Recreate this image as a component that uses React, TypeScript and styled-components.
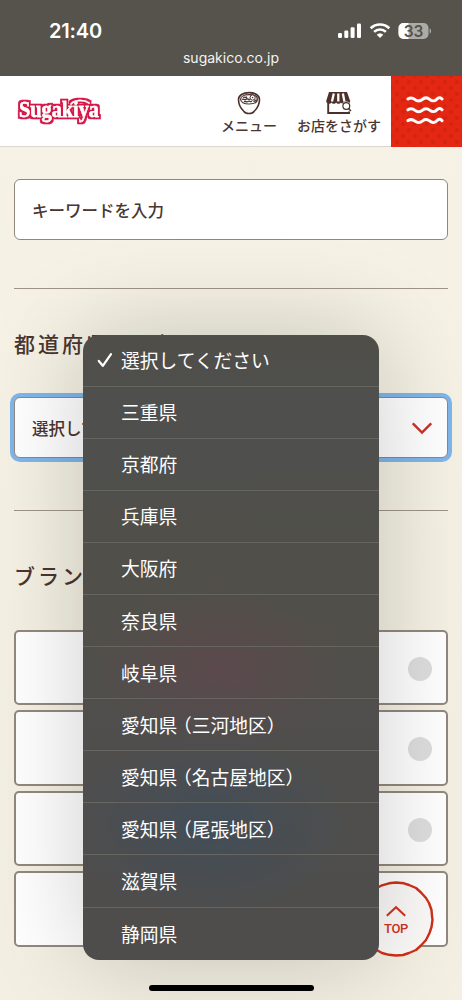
import React from "react";
import styled, { createGlobalStyle } from "styled-components";

const jp = `"Noto Sans CJK JP", sans-serif`;
const latin = `Inter, "Noto Sans CJK JP", sans-serif`;

const GlobalStyle = createGlobalStyle`
  * { box-sizing: border-box; }
  body { margin: 0; background: #f6f2e6; font-family: ${jp}; color: #4b352f; }
`;

const Screen = styled.div`
  position: relative;
  width: 462px;
  height: 1000px;
  overflow: hidden;
  background: linear-gradient(#f7f2e6, #f5f1e4 40%, #f3efe2);
`;

const StatusArea = styled.div`
  height: 76px;
  background: #55534c;
  color: #fff;
  font-family: ${latin};
`;

const StatusRow = styled.div`
  display: flex;
  justify-content: space-between;
  align-items: center;
  height: 48px;
  padding: 14px 30px 0 49px;
`;

const Clock = styled.span`
  font-size: 20px;
  line-height: 24px;
  font-weight: 600;
  letter-spacing: -0.15px;
`;

const StatusIcons = styled.div`
  display: flex;
  align-items: center;
  svg { display: block; }
`;

const Address = styled.div`
  text-align: center;
  font-size: 14px;
  line-height: 20px;
  color: #f4f4f2;
`;

const Header = styled.header`
  display: flex;
  height: 71px;
  background: #fff;
  border-bottom: 1px solid #dcd7cd;
`;

const Logo = styled.div`
  width: 210px;
  padding: 18px 0 0 14px;
  svg { display: block; }
`;

const NavItem = styled.a<{ $width: number }>`
  display: flex;
  flex-direction: column;
  align-items: center;
  width: ${(p) => p.$width}px;
  padding-top: 15px;
  font-size: 14px;
  line-height: 20px;
  font-weight: 500;
  white-space: nowrap;
  svg { display: block; }
`;

const NavGroup = styled.nav`
  display: flex;
  width: 181px;
  gap: 20px;
  padding-left: 11px;
`;

const MenuButton = styled.div`
  display: flex;
  align-items: center;
  justify-content: center;
  width: 71px;
  height: 71px;
  background-color: #e42713;
  background-image:
    radial-gradient(circle, #d3230f 1.5px, transparent 2.3px),
    radial-gradient(circle, #d3230f 1.5px, transparent 2.3px);
  background-size: 12px 12px;
  background-position: 0 0, 6px 6px;
  padding-bottom: 4px;
  padding-right: 4px;
`;

const Content = styled.main`
  padding: 32.4px 14px 0;
`;

const Field = styled.div<{ $focused?: boolean }>`
  display: flex;
  align-items: center;
  justify-content: space-between;
  height: 61.1px;
  padding: 0 15px 0 17px;
  border: 1px solid #91877e;
  border-radius: 6px;
  background: #fff;
  font-size: 16.5px;
  font-weight: 500;
  box-shadow: ${(p) => (p.$focused ? "0 0 0 4px #7fb6ea" : "none")};
`;

const Divider = styled.div<{ $top: number }>`
  height: 1px;
  margin-top: ${(p) => p.$top}px;
  background: #9d9389;
`;

const SectionTitle = styled.h2<{ $top: number; $bottom: number }>`
  margin: ${(p) => p.$top}px 0 ${(p) => p.$bottom}px;
  font-size: 21px;
  line-height: 32px;
  font-weight: 500;
  letter-spacing: 3px;
`;

const BrandList = styled.div`
  display: flex;
  flex-direction: column;
  gap: 5px;
`;

const BrandCard = styled.div`
  display: flex;
  align-items: center;
  justify-content: flex-end;
  height: 75.5px;
  padding: 3px 14px 0 0;
  border: 2px solid #93887e;
  border-radius: 5px;
  background: #fff;
`;

const Radio = styled.span`
  width: 24px;
  height: 24px;
  border-radius: 50%;
  background: #dedede;
`;

const TopButton = styled.div`
  position: absolute;
  left: 358px;
  top: 881px;
  width: 76px;
  height: 76px;
  display: flex;
  flex-direction: column;
  align-items: center;
  padding-top: 23.5px;
  color: #d33222;
  font: 500 13px/16px Roboto, sans-serif;
  letter-spacing: -0.4px;
`;

const Ring = styled.svg`
  position: absolute;
  inset: 0;
`;

const TopArrow = styled.svg`
  position: relative;
  display: block;
  margin-bottom: 4px;
`;

const TopLabel = styled.span`
  position: relative;
`;

const Picker = styled.div`
  position: absolute;
  left: 83px;
  top: 334.5px;
  width: 296px;
  height: 625px;
  overflow: hidden;
  border-radius: 16px;
  background:
    radial-gradient(ellipse 120px 80px at 138px 334px, rgba(98, 70, 77, 0.62), transparent),
    radial-gradient(ellipse 140px 90px at 128px 490px, rgba(62, 78, 92, 0.75), transparent),
    linear-gradient(#4f4e48, #4f4f4d 10%, #4f4f4e 17%, #504f49 32%, #514f4a 50%, #4f4e4d 65%, #4e4d4c);
`;

const PickerShadow = styled.div`
  position: absolute;
  left: 83px;
  top: 334.5px;
  width: 296px;
  height: 625px;
  border-radius: 16px;
  box-shadow: 0 0 100px rgba(0, 0, 0, 0.2);
`;

const Option = styled.div`
  display: flex;
  align-items: center;
  height: 52.1px;
  padding: 0 0 0 14px;
  color: #fff;
  font-size: 18.75px;
  line-height: 28px;
  font-weight: 400;
  &:not(:last-child) { border-bottom: 1px solid #666560; }
`;

const CheckSlot = styled.span`
  width: 24px;
  svg { display: block; }
`;

const OpenParen = styled.span`
  margin-left: -4.3px;
`;

const HomeBar = styled.div`
  position: absolute;
  left: 149px;
  top: 984.5px;
  width: 165px;
  height: 6px;
  border-radius: 3px;
  background: #000;
`;

const BowlIcon = () => (
  <svg width="24" height="24" viewBox="0 0 24 24" fill="none" stroke="#4b302c">
    <path d="M1.500 8.500C1.500 4.300 6 1.600 12 1.600S22.500 4.300 22.500 8.500c0 5-2.500 9.200-5.500 12-1.500 2.600-8.500 2.600-10 0-3-2.800-5.500-7-5.500-12Z" strokeWidth="1.600" />
    <path d="M3.600 8.300C3.600 5.500 7 3.600 12 3.600S20.400 5.500 20.400 8.300c0 2.900-3.400 4.700-8.400 4.700S3.600 11.200 3.600 8.300Z" strokeWidth="1.200" />
    <path d="M5 8.700c1.500-2 2.500 1 4-.5s2.500 1 4 0M6 6.500c1.500-1 2.500.8 4-.8M7 10.800c1.500-1 2.500.8 4-.3s2.500 1 4-.2" strokeWidth="1.300" />
    <circle cx="15.600" cy="6.500" r="2.600" fill="#fff" strokeWidth="1" />
    <circle cx="15.600" cy="6.500" r=".8" fill="#4b302c" stroke="none" />
    <path d="M16.500 10.600l3.200-1.700" strokeWidth="1.400" />
  </svg>
);

const ShopIcon = () => (
  <svg width="26" height="24" viewBox="0 0 26 24" fill="none" stroke="#4b302c">
    <path d="M3 1h18l3.200 9c0 3.200-3.500 3.400-4.500 1.500-1 1.800-3.900 1.800-4.700 0-1 1.800-4 1.800-4.900 0-1 1.800-3.800 1.800-4.600 0-1 1.900-5.300 1.700-5.300-1.500Z" fill="#4b302c" stroke="none" />
    <path d="M7.800 2.500L6 10.600M12.300 2.500v8.100M16.900 2.500l1.500 8.100" stroke="#fff" strokeWidth="2.300" />
    <path d="M2.200 12v10h20.800V20.500" strokeWidth="1.900" />
    <circle cx="20.300" cy="15" r="4.600" fill="#fff" stroke="none" />
    <circle cx="20.300" cy="15" r="3.400" strokeWidth="1.200" />
    <path d="M22.700 17.600l2.200 2.500" strokeWidth="1.500" />
  </svg>
);

const wavePath = (y: number) =>
  `M2 ${y}C5 ${y - 2} 7 ${y - 1} 9 ${y + 0.6}S14 ${y + 2.4} 17 ${y}S22 ${y - 1} 24 ${y + 0.6}S29 ${y + 2.4} 31 ${y}S35 ${y - 1} 36 ${y}`;

const options: Array<[string, string?]> = [
  ["選択してください"],
  ["三重県"],
  ["京都府"],
  ["兵庫県"],
  ["大阪府"],
  ["奈良県"],
  ["岐阜県"],
  ["愛知県", "三河地区"],
  ["愛知県", "名古屋地区"],
  ["愛知県", "尾張地区"],
  ["滋賀県"],
  ["静岡県"],
];

export default function App() {
  return (
    <>
      <GlobalStyle />
      <Screen>
        <StatusArea>
          <StatusRow>
            <Clock>21:40</Clock>
            <StatusIcons>
              <svg width="94" height="18" viewBox="0 0 94 18">
                <g fill="#fff">
                  <rect x="0" y="11" width="4" height="5" rx="1.200" />
                  <rect x="6.300" y="8.500" width="4" height="7.500" rx="1.200" />
                  <rect x="12.600" y="5.200" width="4" height="10.800" rx="1.200" />
                  <rect x="19" y="1.500" width="4" height="14.500" rx="1.200" />
                </g>
                <g fill="none" stroke="#fff" strokeWidth="2.700">
                  <path d="M32.700 6.300a13.300 13.300 0 0 1 18.600 0" />
                  <path d="M36.100 9.900a8.400 8.400 0 0 1 11.800 0" />
                </g>
                <path d="M38.700 12.700a4.800 4.800 0 0 1 6.600 0L42 16Z" fill="#fff" />
                <rect x="60.500" y="1" width="30" height="16" rx="5" fill="#acaba6" />
                <path d="M70.500 1h-5a5 5 0 0 0-5 5v6a5 5 0 0 0 5 5h5Z" fill="#fff" />
                <path d="M91.600 6.500c2 .5 2 4.500 0 5Z" fill="#acaba6" />
                <text x="75.500" y="14.500" textAnchor="middle" fontFamily="Inter" fontWeight="600" fontSize="15.500" fill="#55534c">33</text>
              </svg>
            </StatusIcons>
          </StatusRow>
          <Address>sugakico.co.jp</Address>
        </StatusArea>

        <Header>
          <Logo>
            <svg width="92" height="38" viewBox="0 0 92 38">
              <defs>
                <filter id="outline" x="-10%" y="-20%" width="120%" height="140%">
                  <feMorphology in="SourceAlpha" operator="dilate" radius="2" result="grown" />
                  <feGaussianBlur in="grown" stdDeviation=".35" result="soft" />
                  <feFlood floodColor="#d8164c" />
                  <feComposite in2="soft" operator="in" result="edge" />
                  <feMerge>
                    <feMergeNode in="edge" />
                    <feMergeNode in="SourceGraphic" />
                  </feMerge>
                </filter>
              </defs>
              <g filter="url(#outline)" stroke="#fff" strokeLinejoin="round" strokeLinecap="round">
                <text x="5" y="22.800" textLength="80" lengthAdjust="spacingAndGlyphs" fontFamily="Liberation Serif" fontWeight="700" fontSize="23.500" fill="#fff" strokeWidth=".4">Sugakiya</text>
                <path d="M57 10C60 6 70 5 75 9" fill="none" strokeWidth="1.500" />
              </g>
            </svg>
          </Logo>
          <NavGroup>
            <NavItem $width={56}><BowlIcon />メニュー</NavItem>
            <NavItem $width={84}><ShopIcon />お店をさがす</NavItem>
          </NavGroup>
          <MenuButton>
            <svg width="38" height="34" viewBox="0 0 38 34" fill="none" stroke="#fff" strokeWidth="3" strokeLinecap="round">
              <path d={wavePath(6)} />
              <path d={wavePath(16.800)} />
              <path d={wavePath(27.600)} />
            </svg>
          </MenuButton>
        </Header>

        <Content>
          <Field>キーワードを入力</Field>
          <Divider $top={48} />
          <SectionTitle $top={37.3} $bottom={38.4}>都道府県から探す</SectionTitle>
          <Field $focused>
            選択してください
            <svg width="20" height="14" viewBox="0 0 20 14" fill="none" stroke="#cf3025" strokeWidth="2.400">
              <path d="M.8 2.300L10 11.500L19.200 2.300" />
            </svg>
          </Field>
          <Divider $top={52.2} />
          <SectionTitle $top={47.4} $bottom={38.8}>ブランドから探す</SectionTitle>
          <BrandList>
            <BrandCard><Radio /></BrandCard>
            <BrandCard><Radio /></BrandCard>
            <BrandCard><Radio /></BrandCard>
            <BrandCard />
          </BrandList>
        </Content>

        <TopButton>
          <Ring width="76" height="76" viewBox="0 0 76 76">
            <path
              d="M38 1.500L46 2.300L51 4L58 7L63 11.500L68 17L71 22L73.500 29L74 35L74.500 39L73.500 46L71.500 52L68 59L63 64.500L58 69L51 72L45 74L38 74.500L31 73.800L24 72L17 68L11 63L6 56L3 48L1.800 39L3 29L6 21L11 13L17 8L24 4.300L31 2.300Z"
              fill="#fcfaf9" stroke="#d03018" strokeWidth="2.400" strokeLinejoin="round"
            />
          </Ring>
          <TopArrow width="20" height="12" viewBox="0 0 20 12" fill="none" stroke="#d33222" strokeWidth="2.100">
            <path d="M.8 10.800L10 2.300L19.200 10.800" />
          </TopArrow>
          <TopLabel>TOP</TopLabel>
        </TopButton>

        <PickerShadow />
        <Picker>
          {options.map(([name, area], i) => (
            <Option key={i}>
              <CheckSlot>
                {i === 0 && (
                  <svg width="16" height="16" viewBox="0 0 16 16" fill="none" stroke="#fff" strokeWidth="2.300" strokeLinecap="round" strokeLinejoin="round">
                    <path d="M1.800 9L5.800 13.800L14 2.200" />
                  </svg>
                )}
              </CheckSlot>
              <span>
                {name}
                {area && <><OpenParen>（</OpenParen>{area}）</>}
              </span>
            </Option>
          ))}
        </Picker>
        <HomeBar />
      </Screen>
    </>
  );
}
